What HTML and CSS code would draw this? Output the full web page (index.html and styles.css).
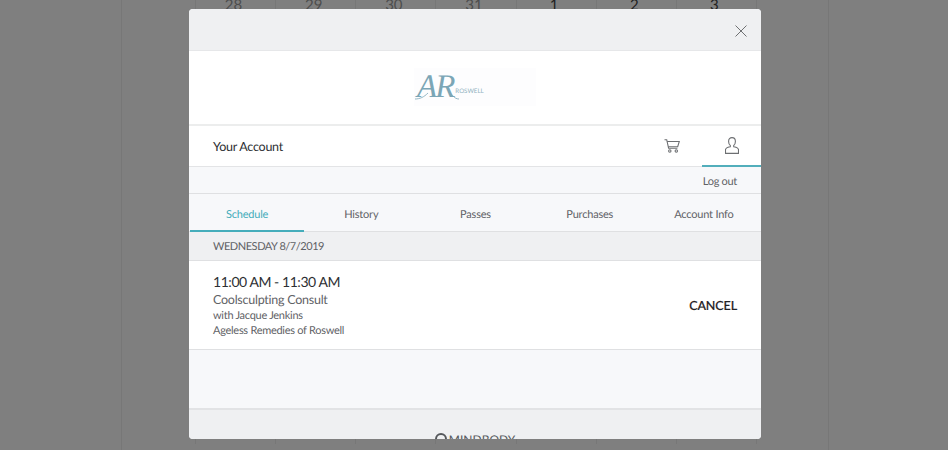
FILE: index.html
```html
<!DOCTYPE html>
<html lang="en">
<head>
  <meta charset="UTF-8">
  <meta name="viewport" content="width=device-width, initial-scale=1.0">
  <title>Your Account</title>
  <link rel="stylesheet" href="styles.css">
</head>
<body>
  <div class="calendar">
    <div class="day muted">28</div>
    <div class="day muted">29</div>
    <div class="day muted">30</div>
    <div class="day muted">31</div>
    <div class="day">1</div>
    <div class="day">2</div>
    <div class="day">3</div>
  </div>

  <div class="modal">
    <div class="modal-top">
      <svg class="close" width="12" height="12" viewBox="0 0 12 12">
        <path d="M.5.5l11 11M11.500.5l-11 11" stroke="#6e7072" stroke-width="1" fill="none"/>
      </svg>
    </div>

    <div class="logo-row">
      <div class="logo">
        <span class="logo-ar">AR</span>
        <span class="logo-name">ROSWELL</span>
        <svg class="logo-swash" width="60" height="38" viewBox="0 0 60 38" fill="none" stroke="#7ba6b6" stroke-width=".8">
          <path d="M1 31c5 0 9-2 13-6"/>
          <path d="M35 24c3 2 5 7 10 7"/>
        </svg>
      </div>
    </div>

    <div class="account-row">
      <div class="account-title">Your Account</div>
      <div class="account-icon cart">
        <svg width="16" height="14" viewBox="0 0 16 14" fill="none" stroke="#6d6f72" stroke-width="1.100">
          <path d="M.5.700h2.200l1.900 8.500h8.800"/>
          <path d="M3.100 2.500h12.200l-1.600 5.200H4.300"/>
          <circle cx="5.800" cy="12" r="1.200"/>
          <circle cx="12.300" cy="12" r="1.200"/>
        </svg>
      </div>
      <div class="account-icon active">
        <svg width="14" height="17" viewBox="0 0 14 17" fill="none" stroke="#6d6f72" stroke-width="1.100">
          <path d="M7 .6C4.900.6 3.600 2.200 3.600 4.400c0 1.700.7 3.200 1.700 4v1.300c-1.700.4-4.800 1-4.800 3.100v3.600h13v-3.600c0-2.100-3.100-2.700-4.800-3.100V8.400c1-.8 1.700-2.300 1.700-4C10.400 2.200 9.100.6 7 .6z"/>
        </svg>
      </div>
    </div>

    <div class="logout-row">Log out</div>

    <div class="tabs">
      <div class="tab active">Schedule</div>
      <div class="tab">History</div>
      <div class="tab">Passes</div>
      <div class="tab">Purchases</div>
      <div class="tab">Account Info</div>
    </div>

    <div class="date-bar">WEDNESDAY 8/7/2019</div>

    <div class="visit">
      <div class="visit-info">
        <div class="visit-time">11:00 AM - 11:30 AM</div>
        <div class="visit-name">Coolsculpting Consult</div>
        <div class="visit-line">with Jacque Jenkins</div>
        <div class="visit-line">Ageless Remedies of Roswell</div>
      </div>
      <div class="cancel">CANCEL</div>
    </div>

    <div class="spacer"></div>

    <div class="footer">
      <div class="brand">
        <span class="brand-mark"></span>
        <span>MINDBODY</span>
      </div>
    </div>
  </div>
</body>
</html>
```

FILE: styles.css
```css
* {
  padding: 0;
  margin: 0;
  box-sizing: border-box;
}
html, body {height: 100%;}
body {
  background: #7f7f7f;
  overflow: hidden;
  font-family: Lato, "Open Sans", sans-serif;
  text-rendering: geometricPrecision;
  color: #5f6266;
}

.calendar {
  display: flex;
  width: 708px;
  height: 450px;
  margin-left: 121px;
  padding: 0 71px 0 73px;
  border-left: 1px solid #777;
  border-right: 1px solid #777;
}
.day {
  flex: 1;
  height: 450px;
  margin-top: -6px;
  padding-right: 4px;
  border-right: 1px solid #777;
  font-size: 15px;
  line-height: 22px;
  text-align: center;
  color: #222;
}
.day:first-child {border-left: 1px solid #777;}
.muted {color: #4d4d4d;}

.modal {
  position: absolute;
  top: 9px;
  left: 189px;
  width: 572px;
  height: 430px;
  display: flex;
  flex-direction: column;
  overflow: hidden;
  border-radius: 4px;
  background: #f7f8fa;
}

.modal-top {
  flex: none;
  height: 42px;
  display: flex;
  align-items: center;
  justify-content: flex-end;
  padding: 2px 14px 0 0;
  background: #eff0f2;
  border-bottom: 1px solid #e6e7e9;
}

.logo-row {
  flex: none;
  height: 75px;
  display: flex;
  align-items: center;
  justify-content: center;
  background: #fff;
  border-bottom: 2px solid #eceded;
}
.logo {
  position: relative;
  width: 122px;
  height: 38px;
  margin-top: -1px;
  display: flex;
  align-items: center;
  padding-left: 3px;
  background: #fdfdfe;
  color: #7ba6b6;
}
.logo-ar {
  font-family: "Liberation Serif", serif;
  font-style: italic;
  font-size: 33px;
  letter-spacing: -2px;
}
.logo-name {
  margin: 8px 0 0 2px;
  font-size: 6.200px;
  color: #8fb2c0;
}
.logo-swash {
  position: absolute;
  top: 0;
  left: 0;
}

.account-row {
  flex: none;
  height: 41px;
  display: flex;
  align-items: center;
  padding-left: 24px;
  background: #fff;
  border-bottom: 1px solid #e3e4e6;
}
.account-title {
  flex: 1;
  padding-top: 1px;
  font-size: 12.500px;
  letter-spacing: -.25px;
  color: #2d2f33;
}
.account-icon {
  width: 59px;
  height: 41px;
  display: flex;
  align-items: center;
  justify-content: center;
}
.account-icon.cart {
  padding-right: 2px;
}
.account-icon.active {
  border-bottom: 2px solid #52aebb;
}

.logout-row {
  flex: none;
  height: 27px;
  padding: 0 24px 0 0;
  border-bottom: 1px solid #dfe0e2;
  font-size: 11px;
  letter-spacing: -.3px;
  line-height: 29px;
  text-align: right;
}

.tabs {
  flex: none;
  height: 38px;
  display: flex;
  padding-left: 1px;
  border-bottom: 1px solid #dfe0e2;
}
.tab {
  flex: 1;
  height: 38px;
  font-size: 11px;
  letter-spacing: -.2px;
  line-height: 41px;
  text-align: center;
}
.tab.active {
  color: #45adbb;
  border-bottom: 2px solid #45adbb;
}

.date-bar {
  flex: none;
  height: 29px;
  padding-left: 24px;
  background: #eff0f2;
  border-bottom: 1px solid #dfe0e2;
  font-size: 11px;
  letter-spacing: -.45px;
  line-height: 29px;
}

.visit {
  flex: none;
  height: 89px;
  display: flex;
  align-items: center;
  justify-content: space-between;
  padding: 0 24px;
  background: #fff;
  border-bottom: 1px solid #dfe0e2;
}
.visit-info {
  padding-bottom: 1px;
}
.visit-time {
  font-size: 14px;
  letter-spacing: -.45px;
  line-height: 20px;
  color: #2d2f33;
}
.visit-name {
  margin-bottom: 1px;
  font-size: 12.500px;
  letter-spacing: -.25px;
  line-height: 15px;
}
.visit-line {
  font-size: 11px;
  letter-spacing: -.28px;
  line-height: 15px;
}
.cancel {
  font-size: 12.500px;
  font-weight: 500;
  letter-spacing: -.1px;
  -webkit-text-stroke: .2px #1f2124;
  color: #1f2124;
}

.spacer {
  flex: none;
  height: 60px;
  border-bottom: 2px solid #e2e3e5;
}

.footer {
  flex: 1;
  display: flex;
  justify-content: center;
  padding-top: 22px;
  background: #eff0f2;
}
.brand {
  display: flex;
  align-items: center;
  gap: 2px;
  height: 14px;
  font-size: 12px;
  color: #55585c;
}
.brand-mark {
  width: 12px;
  height: 12px;
  border: 2px solid #55585c;
  border-radius: 50%;
}
```
